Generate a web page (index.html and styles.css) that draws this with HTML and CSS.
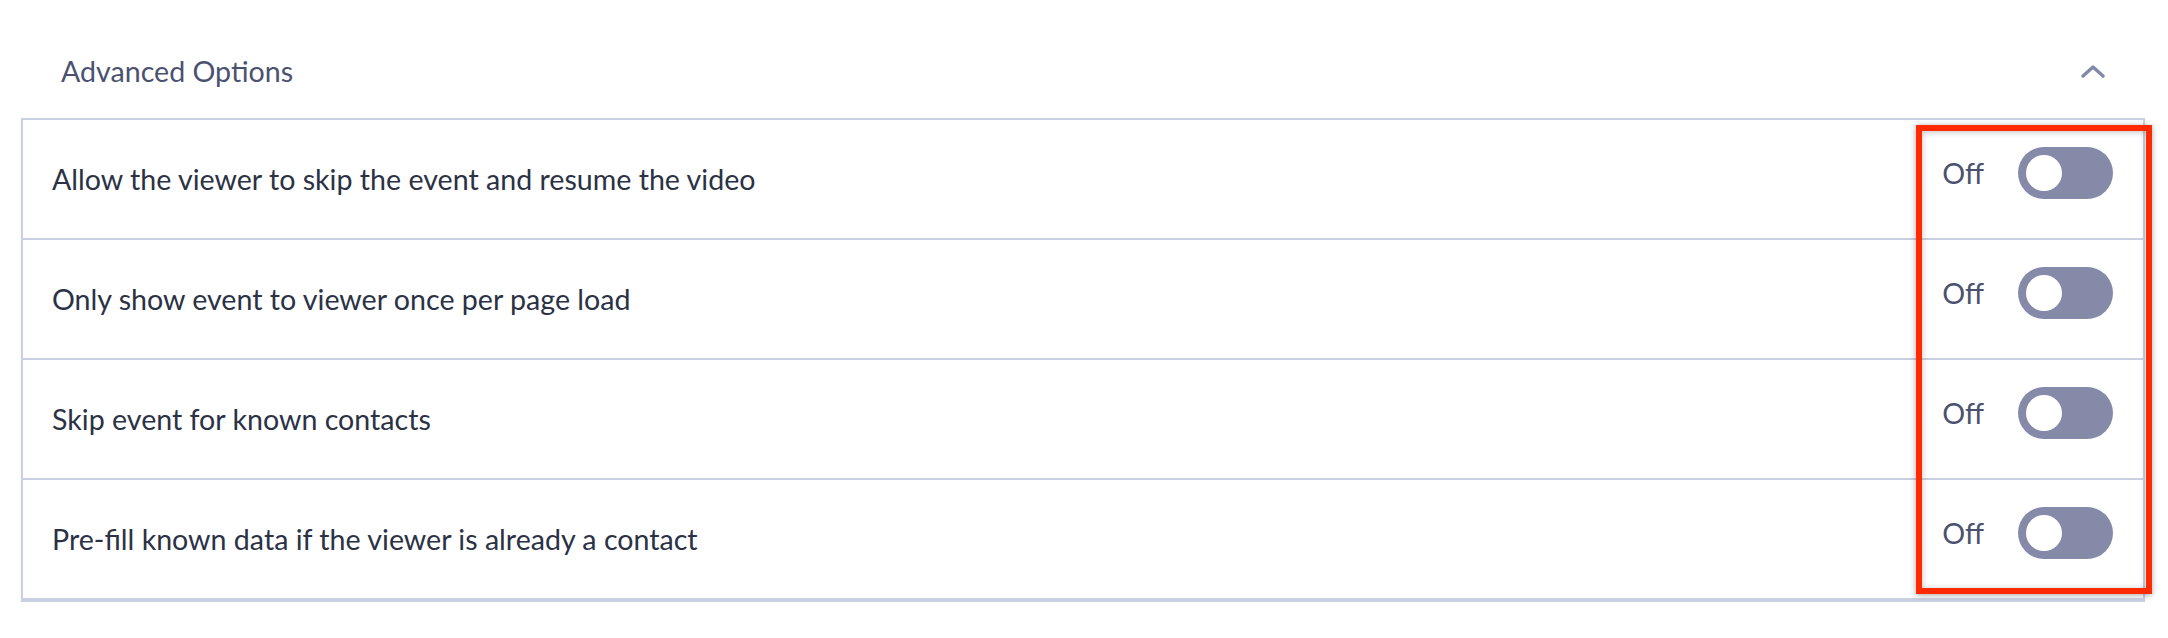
FILE: index.html
```html
<!DOCTYPE html>
<html lang="en">
<head>
    <meta charset="UTF-8">
    <meta name="viewport" content="width=device-width, initial-scale=1.0">
    <title>Advanced Options</title>
    <link rel="stylesheet" href="styles.css">
</head>
<body>
    <div class="page">
        <div class="section-header">
            <span class="section-title">Advanced Options</span>
            <svg class="chevron" width="24" height="14" viewBox="0 0 24 14">
                <polyline points="2,12 12,3 22,12" fill="none" stroke="#8288a8" stroke-width="3.4" stroke-linecap="round" stroke-linejoin="round"/>
            </svg>
        </div>

        <div class="options">
            <div class="option-row">
                <span class="option-label">Allow the viewer to skip the event and resume the video</span>
                <div class="control">
                    <span class="state">Off</span>
                    <span class="toggle"><span class="knob"></span></span>
                </div>
            </div>
            <div class="option-row">
                <span class="option-label">Only show event to viewer once per page load</span>
                <div class="control">
                    <span class="state">Off</span>
                    <span class="toggle"><span class="knob"></span></span>
                </div>
            </div>
            <div class="option-row">
                <span class="option-label">Skip event for known contacts</span>
                <div class="control">
                    <span class="state">Off</span>
                    <span class="toggle"><span class="knob"></span></span>
                </div>
            </div>
            <div class="option-row">
                <span class="option-label">Pre-fill known data if the viewer is already a contact</span>
                <div class="control">
                    <span class="state">Off</span>
                    <span class="toggle"><span class="knob"></span></span>
                </div>
            </div>

            <div class="highlight"></div>
        </div>
    </div>
</body>
</html>
```

FILE: styles.css
```css
body {
    margin: 0;
    background-color: #ffffff;
    font-family: Lato, "Open Sans", sans-serif;
}

.page {
    padding: 47px 23px 0 21px;
}

.section-header {
    display: flex;
    justify-content: space-between;
    align-items: center;
    height: 48px;
    margin-bottom: 23px;
    padding: 0 40px;
}

.section-title {
    font-size: 28.6px;
    color: #4b5270;
}

.chevron {
    display: block;
}

.options {
    position: relative;
    border: 2px solid #c8d0e2;
    box-shadow: 0 2px 3px rgba(0, 0, 0, 0.06);
}

.option-row {
    display: flex;
    justify-content: space-between;
    align-items: center;
    height: 118px;
    padding: 0 30px 0 29px;
    border-bottom: 2px solid #c8d0e2;
}

.option-row:last-of-type {
    border-bottom: none;
}

.option-label {
    font-size: 28.6px;
    color: #2b3245;
}

.control {
    display: flex;
    align-items: center;
    gap: 34px;
    margin-bottom: 12px;
}

.state {
    font-size: 28.6px;
    color: #4b5270;
}

.toggle {
    display: flex;
    align-items: center;
    width: 95px;
    height: 52px;
    padding: 0 8px;
    box-sizing: border-box;
    border-radius: 26px;
    background-color: #858aa8;
}

.knob {
    width: 36px;
    height: 36px;
    border-radius: 50%;
    background-color: #ffffff;
}

.highlight {
    position: absolute;
    top: 5px;
    bottom: 6px;
    right: -9px;
    width: 224px;
    border: 6px solid #ff2a00;
    box-shadow: 0 1px 6px rgba(0, 0, 0, 0.35), inset 0 1px 6px rgba(0, 0, 0, 0.25);
}
```
